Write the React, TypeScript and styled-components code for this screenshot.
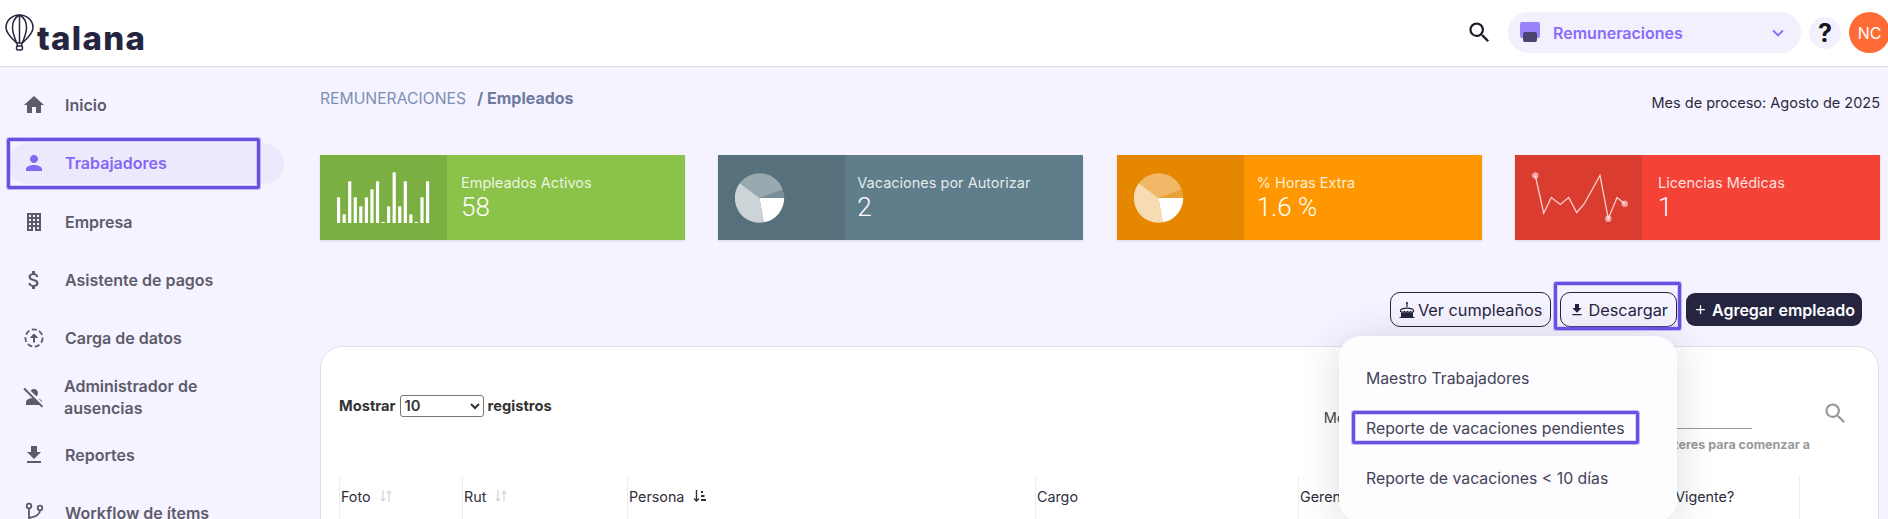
import React from 'react';
import styled, { createGlobalStyle } from 'styled-components';
import { MdHome, MdPerson, MdAttachMoney, MdFileDownload, MdPersonOff, MdSearch, MdKeyboardArrowDown, MdAdd } from 'react-icons/md';

const Global = createGlobalStyle`
  html, body { margin: 0; padding: 0; height: 519px; overflow: hidden; background: #f5f3ff; }
  body { font-family: Inter, "Liberation Sans", sans-serif; }
  * { box-sizing: border-box; }
`;

const Page = styled.div`
  width: 1888px;
  height: 519px;
  overflow: hidden;
  background: #f5f3ff;
  color: #2a2a3c;
`;

const Header = styled.header`
  height: 67px;
  background: #fff;
  border-bottom: 1px solid #dcd9e6;
  display: flex;
  align-items: flex-start;
  justify-content: space-between;
  padding-left: 5px;
`;

const Logo = styled.div`
  display: flex;
  align-items: flex-start;
  padding-top: 14px;
  gap: 3px;
`;

const LogoWord = styled.span`
  font-family: Inter, sans-serif;
  font-weight: 800;
  font-size: 33px;
  line-height: 33px;
  letter-spacing: 1.3px;
  color: #25253f;
  margin-top: 8px;
`;

const HeaderRight = styled.div`
  display: flex;
  align-items: center;
  padding-top: 12px;
  margin-right: -2px;
`;

const SearchButton = styled.span`
  display: flex;
  color: #1c1c28;
  margin-right: 15px;
  font-size: 27px;
`;

const ModuleSelect = styled.div`
  width: 293px;
  height: 41px;
  border-radius: 21px;
  background: #f2f0fd;
  display: flex;
  align-items: center;
  padding-left: 12px;
  padding-right: 12px;
  color: #8b6cf8;
`;

const ModuleName = styled.span`
  font-size: 16px;
  font-weight: 600;
  margin-left: 13px;
  flex: 1;
`;

const HelpButton = styled.span`
  width: 32px;
  height: 32px;
  margin-left: 8px;
  border-radius: 50%;
  background: #f2f0fd;
  display: flex;
  align-items: center;
  justify-content: center;
  font-size: 25px;
  font-weight: 700;
  color: #14141f;
`;

const Avatar = styled.span`
  width: 41px;
  height: 41px;
  margin-left: 8px;
  flex: none;
  border-radius: 50%;
  background: #ff6b35;
  color: #fff;
  display: flex;
  align-items: center;
  justify-content: center;
  font-size: 16px;
`;

const Body = styled.div`
  display: flex;
  height: 452px;
`;

const Sidebar = styled.nav`
  width: 320px;
  flex: none;
  padding: 9px 0 0 8px;
  display: grid;
  grid-auto-rows: 58.3px;
  align-content: start;
`;

const NavSlot = styled.div`
  display: flex;
  align-items: center;
`;

const NavItem = styled.div<{ $active?: boolean }>`
  position: relative;
  width: 276px;
  min-height: 41px;
  display: flex;
  align-items: center;
  gap: 19px;
  padding-left: 14px;
  border-radius: 21px;
  font-size: 16px;
  font-weight: 600;
  line-height: 22px;
  background: ${p => (p.$active ? '#ece9fc' : 'transparent')};
  color: ${p => (p.$active ? '#8467f5' : '#5d5b6b')};
`;

const NavIcon = styled.span`
  width: 24px;
  height: 24px;
  flex: none;
  display: flex;
  align-items: center;
  justify-content: center;
  font-size: 24px;
`;

const TwoLineLabel = styled.span`
  width: 180px;
  margin-left: -1px;
`;

const Highlight = styled.span`
  position: absolute;
  border: 3px solid #6a4fe3;
  border-radius: 2px;
  box-shadow: 0 0 0 1px rgba(150, 130, 240, 0.55), inset 0 0 0 1px rgba(150, 130, 240, 0.35);
  pointer-events: none;
  z-index: 5;
`;

const NavHighlight = styled(Highlight)`
  left: -1px;
  top: -5px;
  width: 253px;
  height: 51px;
`;

const ButtonHighlight = styled(Highlight)`
  left: -7px;
  top: -11px;
  right: -5px;
  bottom: -4px;
`;

const MenuHighlight = styled(Highlight)`
  left: 13px;
  top: 75px;
  width: 287px;
  height: 33px;
`;

const Main = styled.main`
  width: 1559px;
  flex: none;
`;

const TopRow = styled.div`
  height: 88px;
  display: flex;
  justify-content: space-between;
  padding-top: 21px;
`;

const Breadcrumb = styled.div`
  font-size: 15.7px;
  line-height: 20px;
  color: #7e8fb3;
`;

const Crumb = styled.b`
  font-size: 16px;
  font-weight: 700;
  color: #6c7b9e;
  margin-left: 11px;
`;

const ProcessMonth = styled.div`
  font-size: 14.5px;
  line-height: 20px;
  margin-top: 5px;
  margin-right: -1px;
  color: #2a2a3c;
`;

const Cards = styled.div`
  display: grid;
  grid-template-columns: repeat(4, 365px);
  justify-content: space-between;
  width: 1560px;
`;

const Card = styled.div<{ $bg: string }>`
  height: 85px;
  display: flex;
  background: ${p => p.$bg};
  color: #fff;
  box-shadow: 0 1px 2px rgba(0, 0, 0, 0.12);
  font-family: Roboto, sans-serif;
`;

const CardIcon = styled.div`
  width: 127px;
  flex: none;
  background: rgba(0, 0, 0, 0.1);
  display: flex;
  align-items: center;
  padding-left: 17px;
`;

const CardBody = styled.div<{ $inset: number }>`
  padding: 18px 0 0 ${p => p.$inset}px;
`;

const CardLabel = styled.div`
  font-family: Inter, sans-serif;
  font-size: 14.5px;
  line-height: 20px;
  color: rgba(255, 255, 255, 0.85);
`;

const CardValue = styled.div`
  font-size: 26px;
  font-weight: 300;
  line-height: 28px;
`;

const Actions = styled.div`
  display: flex;
  justify-content: flex-end;
  gap: 9px;
  padding: 52px 17px 0 0;
  height: 106px;
  align-items: flex-start;
`;

const OutlineButton = styled.button`
  position: relative;
  height: 35px;
  padding: 0 8px;
  display: flex;
  align-items: center;
  gap: 3px;
  background: transparent;
  border: 1px solid #25253f;
  border-radius: 10px;
  font-family: Inter, sans-serif;
  font-size: 16.3px;
  color: #25253f;
`;

const PrimaryButton = styled.button`
  height: 33px;
  margin-top: 1px;
  padding: 0 7px;
  display: flex;
  align-items: center;
  gap: 4px;
  border: 0;
  border-radius: 9px;
  background: #25253f;
  color: #fff;
  font-family: Inter, sans-serif;
  font-size: 16px;
  font-weight: 600;
`;

const Dropdown = styled.div`
  position: absolute;
  right: -1px;
  top: 43px;
  width: 338px;
  height: 186px;
  border-radius: 22px;
  background: #fdfcff;
  box-shadow: 0 4px 40px rgba(40, 40, 60, 0.16);
  padding-top: 17px;
  z-index: 4;
  text-align: left;
`;

const MenuItem = styled.div`
  height: 50px;
  padding-left: 27px;
  display: flex;
  align-items: center;
  font-size: 15.8px;
  color: #444357;
`;

const Panel = styled.section`
  height: 300px;
  background: #fff;
  border: 1px solid #e0dfe8;
  border-radius: 22px;
`;

const PanelTop = styled.div`
  height: 129px;
  display: flex;
  align-items: flex-start;
  padding-left: 18px;
`;

const ShowControl = styled.div`
  margin-top: 48px;
  display: flex;
  align-items: center;
  gap: 4px;
  font-size: 14.7px;
  font-weight: 700;
  color: #333;
`;

const ShowSelect = styled.select`
  width: 84px;
  height: 22px;
  font-family: Inter, sans-serif;
  font-size: 14.7px;
  font-weight: 600;
  color: #333;
  background: #fff;
  border: 1px solid #767676;
  border-radius: 3px;
`;

const SearchArea = styled.div`
  margin-left: auto;
  display: flex;
  align-items: flex-start;
`;

const SearchLabel = styled.div`
  margin-top: 61px;
  font-size: 14.5px;
  line-height: 20px;
  color: #444;
  margin-right: 5px;
`;

const SearchField = styled.div`
  width: 370px;
  margin-top: 81px;
  border-top: 1px solid #9a9a9a;
`;

const SearchHint = styled.div`
  display: flex;
  justify-content: flex-end;
  margin-right: -58px;
  margin-top: 8px;
  font-size: 12.5px;
  font-weight: 700;
  line-height: 16px;
  color: #999;
  white-space: nowrap;
`;

const TableSearchIcon = styled.span`
  display: flex;
  margin: 53px 29px 0 70px;
  color: #9a9a9a;
  font-size: 27px;
`;

const TableHead = styled.div`
  display: grid;
  grid-template-columns: 123px 165px 408px 263px 369px 132px 59px;
  margin-left: 18px;
  height: 100px;
`;

const HeadCell = styled.div`
  border-left: 1px solid #eeeef2;
  padding: 12px 0 0 1px;
  display: flex;
  align-items: flex-start;
  gap: 9px;
  font-size: 14.3px;
  line-height: 18px;
  color: #2f2f3d;
`;

const SortIcon = ({ active }: { active?: boolean }) =>
  active ? (
    <svg width="13" height="14" viewBox="0 0 13 14" style={{ marginTop: 1 }}>
      <path d="M3.500 1v11M1 9.500 3.500 12 6 9.500" fill="none" stroke="#33333f" strokeWidth="1.400" />
      <path d="M8 2h2v2H8zM8 6h3.500v2H8zM8 10h5v2H8z" fill="#33333f" />
    </svg>
  ) : (
    <svg width="12" height="14" viewBox="0 0 12 14" style={{ marginTop: 1 }}>
      <path d="M3 1v11M1 9.500 3 12l2-2.500M9 13V2M7 4.500 9 2l2 2.500" fill="none" stroke="#d8d8dc" strokeWidth="1.400" />
    </svg>
  );

const BalloonLogo = () => (
  <svg width="29" height="37" viewBox="0 0 29 37" fill="none" stroke="#25253f" strokeWidth="1.500">
    <path d="M14.500 1C7 1 1 6.600 1 13.400c0 6.300 6.400 11.300 10.700 15.600h5.600C21.600 24.700 28 19.700 28 13.400 28 6.600 22 1 14.500 1Z" />
    <path d="M14.500 1C10 3.500 7.500 8 7.500 13.400c0 6 2.500 11 4.200 15.600M14.500 1c4.500 2.500 7 7 7 12.400 0 6-2.500 11-4.200 15.600" />
    <path d="M14.500 1v28" />
    <rect x="11.500" y="32" width="6" height="4" rx="1.500" />
    <path d="M12 29l.5 3M17 29l-.5 3" />
  </svg>
);

const ModuleIcon = () => (
  <svg width="20" height="21" viewBox="0 0 20 21">
    <rect x="0" y="0" width="20" height="16" rx="2" fill="#9b84fb" />
    <rect x="3" y="10" width="14" height="10" rx="2" fill="#4a4570" />
  </svg>
);

const BuildingIcon = () => (
  <svg width="24" height="24" viewBox="0 0 24 24">
    <path
      fillRule="evenodd"
      fill="currentColor"
      d="M5 3h14v18H5zM7 5v2h2V5zm4 0v2h2V5zm4 0v2h2V5zM7 9v2h2V9zm4 0v2h2V9zm4 0v2h2V9zM7 13v2h2v-2zm4 0v2h2v-2zm4 0v2h2v-2zM7 17v2h2v-2zm8 0v2h2v-2zm-4 0v4h2v-4z"
    />
  </svg>
);

const UploadIcon = () => (
  <svg width="24" height="24" viewBox="0 0 24 24" fill="none" stroke="currentColor">
    <circle cx="12" cy="12" r="8.600" strokeWidth="1.800" strokeDasharray="5 2.600" />
    <path d="M12 16.500V9" strokeWidth="2" />
    <path d="m8.500 11.500 3.500-3.500 3.500 3.500z" fill="currentColor" strokeWidth="1" />
  </svg>
);

const WorkflowIcon = () => (
  <svg width="24" height="24" viewBox="0 0 24 24" fill="none" stroke="currentColor" strokeWidth="1.800">
    <circle cx="7" cy="5" r="2.300" />
    <circle cx="18" cy="7" r="2.300" />
    <path d="M7 7.500V20M18 9.500c0 5-6 6.500-11 7.500" />
  </svg>
);

const CakeIcon = () => (
  <svg width="16" height="18" viewBox="0 0 16 18">
    <path d="M8 2v4" stroke="#25253f" strokeWidth="1.200" />
    <circle cx="8" cy="2" r="1" fill="#25253f" />
    <path d="M1.500 9c2-2.500 11-2.500 13 0v1.500c-1 1-2 1-3 0-1 1-2 1-3 0-1 1-2 1-3 0-1 1-2 1-4 0z" fill="none" stroke="#25253f" strokeWidth="1.100" />
    <path d="M2 11.500h12V16H2z" fill="#25253f" />
    <path d="M0.500 16.500h15" stroke="#25253f" strokeWidth="1" />
  </svg>
);

const BarChart = () => {
  const tops = [171, 222, 123, 171, 198, 171, 147, 123, 245, 198, 96, 198, 123, 222, 245, 171, 123];
  return (
    <svg width="100" height="60" viewBox="0 0 100 60">
      {tops.map((t, i) => (
        <rect key={i} x={i * 5.56} y={55 - (248 - t) / 3} width="3.200" height={(248 - t) / 3} fill="#fff" />
      ))}
    </svg>
  );
};

const slice = (from: number, to: number) => {
  const cx = 24.5, cy = 30, r = 24.7;
  const pt = (a: number) => [cx + r * Math.cos((a * Math.PI) / 180), cy + r * Math.sin((a * Math.PI) / 180)];
  const [x1, y1] = pt(from);
  const [x2, y2] = pt(to);
  return `M${cx} ${cy}L${x1} ${y1}A${r} ${r} 0 ${to - from > 180 ? 1 : 0} 1 ${x2} ${y2}Z`;
};

const PieChart = () => (
  <svg width="100" height="60" viewBox="0 0 100 60">
    <path d={slice(0, 80)} fill="#fff" />
    <path d={slice(80, 217)} fill="#fff" fillOpacity="0.7" />
    <path d={slice(217, 340)} fill="#fff" fillOpacity="0.4" />
    <path d={slice(340, 360)} fill="#fff" fillOpacity="0.22" />
  </svg>
);

const SparkLine = () => (
  <svg width="100" height="60" viewBox="0 0 100 60" fill="#fff">
    <polyline
      points="3.300,7.500 11.700,45.200 19.300,29.500 28.300,36.500 36.700,29.500 44.700,44.500 52,36.200 68,7.500 76.300,50.800 85,29.500 92.700,35.800"
      fill="none"
      stroke="#fff"
      strokeOpacity="0.75"
      strokeWidth="1.300"
    />
    <circle cx="3.300" cy="7.500" r="3.200" fillOpacity="0.55" />
    <circle cx="76.300" cy="50.800" r="3.200" fillOpacity="0.55" />
    <circle cx="92.700" cy="35.800" r="3.200" fillOpacity="0.55" />
  </svg>
);

export default function App() {
  return (
    <Page>
      <Global />
      <Header>
        <Logo>
          <BalloonLogo />
          <LogoWord>talana</LogoWord>
        </Logo>
        <HeaderRight>
          <SearchButton><MdSearch /></SearchButton>
          <ModuleSelect>
            <ModuleIcon />
            <ModuleName>Remuneraciones</ModuleName>
            <MdKeyboardArrowDown size={22} />
          </ModuleSelect>
          <HelpButton>?</HelpButton>
          <Avatar>NC</Avatar>
        </HeaderRight>
      </Header>
      <Body>
        <Sidebar>
          <NavSlot><NavItem><NavIcon><MdHome /></NavIcon>Inicio</NavItem></NavSlot>
          <NavSlot>
            <NavItem $active>
              <NavIcon><MdPerson /></NavIcon>Trabajadores
              <NavHighlight />
            </NavItem>
          </NavSlot>
          <NavSlot><NavItem><NavIcon><BuildingIcon /></NavIcon>Empresa</NavItem></NavSlot>
          <NavSlot><NavItem><NavIcon><MdAttachMoney /></NavIcon>Asistente de pagos</NavItem></NavSlot>
          <NavSlot><NavItem><NavIcon><UploadIcon /></NavIcon>Carga de datos</NavItem></NavSlot>
          <NavSlot><NavItem><NavIcon><MdPersonOff /></NavIcon><TwoLineLabel>Administrador de ausencias</TwoLineLabel></NavItem></NavSlot>
          <NavSlot><NavItem><NavIcon><MdFileDownload /></NavIcon>Reportes</NavItem></NavSlot>
          <NavSlot><NavItem><NavIcon><WorkflowIcon /></NavIcon>Workflow de ítems</NavItem></NavSlot>
        </Sidebar>
        <Main>
          <TopRow>
            <Breadcrumb>REMUNERACIONES<Crumb>/ Empleados</Crumb></Breadcrumb>
            <ProcessMonth>Mes de proceso: Agosto de 2025</ProcessMonth>
          </TopRow>
          <Cards>
            <Card $bg="#8bc34a">
              <CardIcon><BarChart /></CardIcon>
              <CardBody $inset={14}><CardLabel>Empleados Activos</CardLabel><CardValue>58</CardValue></CardBody>
            </Card>
            <Card $bg="#607d8b">
              <CardIcon><PieChart /></CardIcon>
              <CardBody $inset={12}><CardLabel>Vacaciones por Autorizar</CardLabel><CardValue>2</CardValue></CardBody>
            </Card>
            <Card $bg="#ff9800">
              <CardIcon><PieChart /></CardIcon>
              <CardBody $inset={13}><CardLabel>% Horas Extra</CardLabel><CardValue>1.6 %</CardValue></CardBody>
            </Card>
            <Card $bg="#f44336">
              <CardIcon><SparkLine /></CardIcon>
              <CardBody $inset={16}><CardLabel>Licencias Médicas</CardLabel><CardValue>1</CardValue></CardBody>
            </Card>
          </Cards>
          <Actions>
            <OutlineButton><CakeIcon />Ver cumpleaños</OutlineButton>
            <OutlineButton>
              <MdFileDownload size={16} />Descargar
              <ButtonHighlight />
              <Dropdown>
                <MenuItem>Maestro Trabajadores</MenuItem>
                <MenuItem>Reporte de vacaciones pendientes</MenuItem>
                <MenuItem>Reporte de vacaciones &lt; 10 días</MenuItem>
                <MenuHighlight />
              </Dropdown>
            </OutlineButton>
            <PrimaryButton><MdAdd size={15} />Agregar empleado</PrimaryButton>
          </Actions>
          <Panel>
            <PanelTop>
              <ShowControl>
                Mostrar
                <ShowSelect defaultValue="10">
                  <option value="10">10</option>
                  <option value="25">25</option>
                  <option value="50">50</option>
                </ShowSelect>
                registros
              </ShowControl>
              <SearchArea>
                <SearchLabel>Mostrar</SearchLabel>
                <SearchField>
                  <SearchHint>Ingrese al menos 3 caracteres para comenzar a</SearchHint>
                </SearchField>
                <TableSearchIcon><MdSearch /></TableSearchIcon>
              </SearchArea>
            </PanelTop>
            <TableHead>
              <HeadCell>Foto <SortIcon /></HeadCell>
              <HeadCell>Rut <SortIcon /></HeadCell>
              <HeadCell>Persona <SortIcon active /></HeadCell>
              <HeadCell>Cargo</HeadCell>
              <HeadCell>Gerencia</HeadCell>
              <HeadCell>¿Vigente?</HeadCell>
              <HeadCell />
            </TableHead>
          </Panel>
        </Main>
      </Body>
    </Page>
  );
}
